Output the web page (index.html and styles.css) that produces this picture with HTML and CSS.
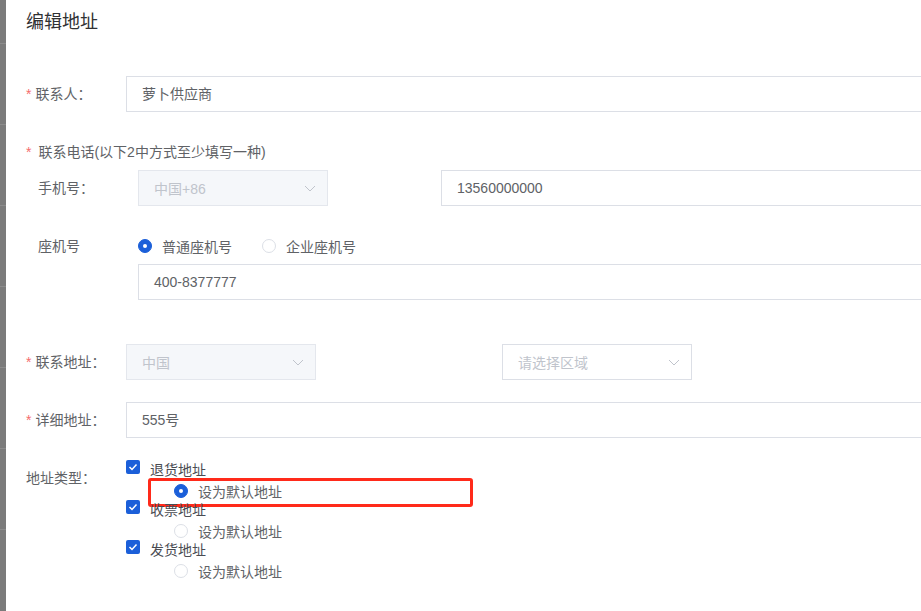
FILE: index.html
```html
<!DOCTYPE html>
<html lang="zh-CN">
<head>
  <meta charset="UTF-8" />
  <meta name="viewport" content="width=device-width, initial-scale=1.0"/>
  <title>编辑地址</title>
  <link rel="stylesheet" href="styles.css">
</head>
<body>
  <div class="page">
    <div class="backdrop"></div>

    <div class="dialog">
      <h2 class="dialog-title">编辑地址</h2>

      <form class="form">
        <div class="form-item">
          <label class="form-label required">联系人：</label>
          <div class="input">萝卜供应商</div>
        </div>

        <div class="form-item column">
          <label class="section-label required">联系电话(以下2中方式至少填写一种)</label>
          <div class="phone-block">
            <div class="form-item">
              <label class="form-label">手机号：</label>
              <div class="select disabled">
                <span>中国+86</span>
                <svg class="chevron" viewBox="0 0 12 7"><polyline points="1,1 6,6 11,1"/></svg>
              </div>
              <div class="input phone">13560000000</div>
            </div>

            <div class="form-item">
              <label class="form-label">座机号</label>
              <div class="form-content">
                <div class="radio-group">
                  <span class="radio-item"><span class="radio checked"></span>普通座机号</span>
                  <span class="radio-item"><span class="radio"></span>企业座机号</span>
                </div>
                <div class="input">400-8377777</div>
              </div>
            </div>
          </div>
        </div>

        <div class="form-item">
          <label class="form-label required">联系地址：</label>
          <div class="select disabled">
            <span>中国</span>
            <svg class="chevron" viewBox="0 0 12 7"><polyline points="1,1 6,6 11,1"/></svg>
          </div>
          <div class="select region">
            <span class="placeholder">请选择区域</span>
            <svg class="chevron" viewBox="0 0 12 7"><polyline points="1,1 6,6 11,1"/></svg>
          </div>
        </div>

        <div class="form-item">
          <label class="form-label required">详细地址：</label>
          <div class="input">555号</div>
        </div>

        <div class="form-item">
          <label class="form-label">地址类型：</label>
          <div class="form-content">
            <div class="check-group">
              <div class="check-line"><span class="checkbox"><svg viewBox="0 0 14 14"><polyline points="3.5,7 6,9.5 10.5,4.5"/></svg></span>退货地址</div>
              <div class="default-line"><span class="radio checked"></span>设为默认地址</div>
              <div class="mark"></div>
            </div>
            <div class="check-group">
              <div class="check-line"><span class="checkbox"><svg viewBox="0 0 14 14"><polyline points="3.5,7 6,9.5 10.5,4.5"/></svg></span>收票地址</div>
              <div class="default-line"><span class="radio"></span>设为默认地址</div>
            </div>
            <div class="check-group">
              <div class="check-line"><span class="checkbox"><svg viewBox="0 0 14 14"><polyline points="3.5,7 6,9.5 10.5,4.5"/></svg></span>发货地址</div>
              <div class="default-line"><span class="radio"></span>设为默认地址</div>
            </div>
          </div>
        </div>
      </form>
    </div>
  </div>
</body>
</html>
```

FILE: styles.css
```css
* {
  box-sizing: border-box;
}
body {
  margin: 0;
  background: #fff;
  color: #606266;
  font-family: "Liberation Sans", "Noto Sans CJK SC", sans-serif;
  font-size: 14px;
  overflow: hidden;
}
.page {
  display: flex;
  width: 100%;
  height: 611px;
  overflow: hidden;
}
.backdrop {
  width: 6px;
  flex: none;
  background: repeating-linear-gradient(to bottom, #7b7b7b 0, #7b7b7b 80px, #8c8c8c 80px, #8c8c8c 81px);
  background-position: 0 -37px;
}
.dialog {
  flex: none;
  width: 1200px;
  background: #fff;
  padding: 10px 0 0 20px;
}
.dialog-title {
  margin: 0;
  font-size: 18px;
  line-height: 24px;
  font-weight: normal;
  color: #303133;
}
.form {
  margin-top: 42px;
}
.form-item {
  display: flex;
  margin-bottom: 22px;
}
.form-item.column {
  flex-direction: column;
}
.form-label {
  width: 100px;
  flex: none;
  line-height: 36px;
}
.section-label {
  line-height: 36px;
}
.required::before {
  content: "*";
  color: #f56c6c;
  margin-right: 4px;
}
.section-label.required::before {
  margin-right: 7px;
}
.phone-block {
  padding-left: 12px;
}
.form-content {
  flex: 1;
  display: flex;
  flex-direction: column;
}
.input {
  flex: 1;
  height: 36px;
  line-height: 34px;
  padding: 0 15px;
  border: 1px solid #dcdfe6;
  color: #606266;
}
.input.phone {
  margin-left: 113px;
}
.select {
  width: 190px;
  flex: none;
  height: 36px;
  display: flex;
  align-items: center;
  justify-content: space-between;
  padding: 0 11px 0 15px;
  border: 1px solid #dcdfe6;
}
.select.disabled {
  background: #f5f7fa;
  border-color: #e4e7ed;
  color: #c0c4cc;
}
.select.region {
  margin-left: 186px;
}
.placeholder {
  color: #c0c4cc;
}
.chevron {
  width: 12px;
  height: 7px;
  fill: none;
  stroke: #c0c4cc;
  stroke-width: 1;
}
.radio-group {
  display: flex;
  align-items: center;
  height: 36px;
}
.radio-item {
  display: flex;
  align-items: center;
  gap: 10px;
  margin-right: 30px;
}
.radio {
  width: 14px;
  height: 14px;
  flex: none;
  border: 1px solid #dcdfe6;
  border-radius: 50%;
  background: #fff;
  position: relative;
}
.radio.checked {
  background: #1b5fd9;
  border-color: #1b5fd9;
}
.radio.checked::after {
  content: "";
  position: absolute;
  left: 4px;
  top: 4px;
  width: 4px;
  height: 4px;
  border-radius: 50%;
  background: #fff;
}
.check-group {
  position: relative;
}
.check-line {
  display: flex;
  align-items: flex-start;
  gap: 10px;
  height: 20px;
  line-height: 20px;
  color: #4a4c52;
}
.checkbox {
  width: 14px;
  height: 14px;
  flex: none;
  background: #1b5fd9;
  border-radius: 2px;
}
.checkbox svg {
  display: block;
  width: 14px;
  height: 14px;
  fill: none;
  stroke: #fff;
  stroke-width: 1.5;
}
.default-line {
  display: flex;
  align-items: center;
  gap: 10px;
  height: 20px;
  margin-top: 1px;
  margin-bottom: -1px;
  padding-left: 48px;
}
.mark {
  position: absolute;
  left: 22px;
  top: 18px;
  width: 325px;
  height: 29px;
  border: 3px solid #ff2a1a;
  border-radius: 3px;
}
```
